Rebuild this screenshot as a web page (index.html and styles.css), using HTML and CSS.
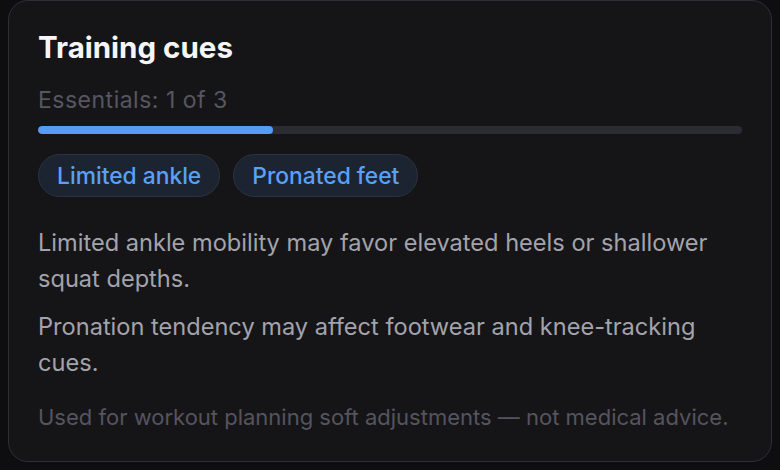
FILE: index.html
```html
<!DOCTYPE html>
<html lang="en">
<head>
    <meta charset="UTF-8">
    <meta name="viewport" content="width=device-width, initial-scale=1.0">
    <title>Training cues</title>
    <link rel="stylesheet" href="styles.css">
</head>
<body>

    <section class="card">
        <h2 class="card-title">Training cues</h2>
        <div class="progress-label">Essentials: 1 of 3</div>
        <div class="progress">
            <div class="progress-fill" style="width: 33.333%"></div>
        </div>

        <div class="chips">
            <span class="chip">Limited ankle</span>
            <span class="chip">Pronated feet</span>
        </div>

        <p class="cue">Limited ankle mobility may favor elevated heels or shallower squat depths.</p>
        <p class="cue">Pronation tendency may affect footwear and knee-tracking cues.</p>

        <p class="note">Used for workout planning soft adjustments — not medical advice.</p>
    </section>

</body>
</html>
```

FILE: styles.css
```css
html, body {
    background: #0e0e10;
}
body {
    font-family: Inter, "Noto Sans", sans-serif;
    margin: 0;
    padding: 0 8px 8px;
}
.card {
    background: #151517;
    border: 1px solid #2f2f37;
    border-radius: 20px;
    padding: 28px 29px 31px;
    height: 462px;
    box-sizing: border-box;
}
.card-title {
    margin: 0;
    font-size: 29.5px;
    line-height: 36px;
    font-weight: 700;
    color: #f5f5f7;
}
.progress-label {
    margin-top: 21px;
    font-size: 23px;
    line-height: 28px;
    letter-spacing: 0.5px;
    color: #575662;
}
.progress {
    margin-top: 12px;
    height: 8px;
    border-radius: 4px;
    background: #2b2b33;
    overflow: hidden;
}
.progress-fill {
    height: 100%;
    border-radius: 4px;
    background: #569cf7;
}
.chips {
    display: flex;
    gap: 13px;
    margin-top: 20px;
}
.chip {
    padding: 7px 18px;
    border: 1px solid #2c3340;
    border-radius: 999px;
    background: #1d2431;
    color: #5aa0f5;
    font-size: 22.8px;
    line-height: 27px;
    font-weight: 500;
}
.cue {
    margin: 28px 0 0;
    font-size: 23.6px;
    line-height: 36px;
    color: #a3a3ad;
}
.cue + .cue {
    margin-top: 12px;
}
.note {
    margin: 22px 0 0;
    font-size: 22px;
    line-height: 28px;
    color: #55545f;
}
```
